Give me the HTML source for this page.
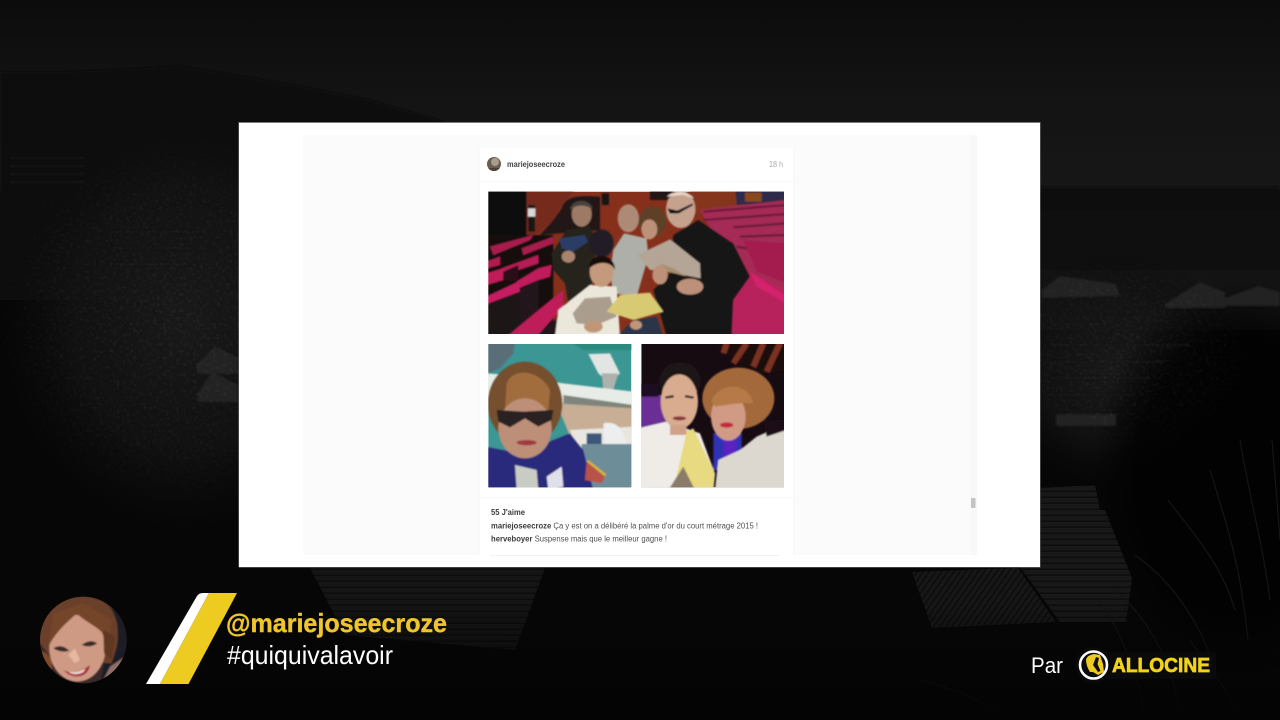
<!DOCTYPE html>
<html lang="fr">
<head>
<meta charset="utf-8">
<title>#quiquivalavoir</title>
<style>
html,body{margin:0;padding:0;width:1280px;height:720px;overflow:hidden;background:#060606}
svg{display:block}
text{font-family:"Liberation Sans",sans-serif}
</style>
</head>
<body>
<svg width="1280" height="720" viewBox="0 0 1280 720" xmlns="http://www.w3.org/2000/svg">
<defs>
<linearGradient id="sky" x1="0" y1="0" x2="0" y2="1"><stop offset="0" stop-color="#0c0c0c"/><stop offset=".5" stop-color="#131313"/><stop offset="1" stop-color="#171717"/></linearGradient>
<linearGradient id="fadeB" x1="0" y1="0" x2="0" y2="1"><stop offset="0" stop-color="#040404" stop-opacity="0"/><stop offset="1" stop-color="#040404"/></linearGradient>
<radialGradient id="lit"><stop offset="0" stop-color="#191919"/><stop offset=".6" stop-color="#131313" stop-opacity=".8"/><stop offset="1" stop-color="#0a0a0a" stop-opacity="0"/></radialGradient>
<radialGradient id="blk"><stop offset="0" stop-color="#020202"/><stop offset=".7" stop-color="#020202" stop-opacity=".9"/><stop offset="1" stop-color="#020202" stop-opacity="0"/></radialGradient>
<radialGradient id="wm"><stop offset="0" stop-color="#fff"/><stop offset=".6" stop-color="#fff" stop-opacity=".7"/><stop offset="1" stop-color="#fff" stop-opacity="0"/></radialGradient>
<mask id="mL" maskUnits="userSpaceOnUse" x="0" y="0" width="1280" height="720"><ellipse cx="170" cy="320" rx="200" ry="210" fill="url(#wm)"/><ellipse cx="1120" cy="350" rx="150" ry="110" fill="url(#wm)"/></mask>
<pattern id="roofH" width="5" height="6" patternUnits="userSpaceOnUse"><rect width="5" height="6" fill="#181818"/><rect y="4.500" width="5" height="1.500" fill="#0d0d0d"/></pattern>
<pattern id="roofD" width="5" height="5" patternUnits="userSpaceOnUse" patternTransform="rotate(35)"><rect width="5" height="5" fill="#171717"/><rect x="3.500" width="1.500" height="5" fill="#0c0c0c"/></pattern>
<filter id="b1" x="-5%" y="-5%" width="110%" height="110%"><feGaussianBlur stdDeviation="1"/></filter>
<filter id="b3" x="-10%" y="-10%" width="120%" height="120%"><feGaussianBlur stdDeviation="2.200"/></filter>
<filter id="t" x="0" y="0" width="100%" height="100%"><feGaussianBlur stdDeviation=".25"/></filter>
<filter id="noise" x="0" y="0" width="100%" height="100%"><feTurbulence type="fractalNoise" baseFrequency=".3" numOctaves="2" seed="7"/><feColorMatrix values="0 0 0 0 1  0 0 0 0 1  0 0 0 0 1  2 0 0 0 -.95"/></filter>
<clipPath id="c1"><rect x="55" y="155" width="887" height="427"/></clipPath>
<clipPath id="c2"><rect x="55" y="12" width="429" height="430"/></clipPath>
<clipPath id="c3"><rect x="514" y="12" width="428" height="430"/></clipPath>
<clipPath id="cAv"><circle cx="250" cy="180" r="130"/></clipPath>
<clipPath id="cSm"><circle cx="494" cy="164" r="7"/></clipPath>
</defs>

<!-- background -->
<rect width="1280" height="720" fill="#060606"/>
<rect width="1280" height="190" fill="url(#sky)"/>
<path d="M0 72 L60 72 L110 70 L180 66 L240 76 L300 86 L370 100 L445 122 L445 300 L0 300Z" fill="#090909" filter="url(#b1)"/>
<ellipse cx="185" cy="320" rx="190" ry="220" fill="url(#lit)"/>
<rect x="1040" y="187" width="240" height="23" fill="#090909" filter="url(#b1)"/>
<rect x="1040" y="210" width="240" height="60" fill="#0f0f0f"/>
<rect x="1040" y="270" width="240" height="60" fill="#131313"/>
<ellipse cx="1115" cy="370" rx="130" ry="120" fill="url(#lit)"/>
<ellipse cx="1240" cy="480" rx="150" ry="200" fill="url(#blk)"/>
<g fill="#222" filter="url(#b1)">
<path d="M197 364 L215 346 L238 358 V374 H197Z"/>
<path d="M197 394 L212 372 L238 385 V402 H197Z"/>
<path d="M1042 290 L1060 276 L1116 284 L1120 296 L1042 298Z"/>
<path d="M1165 304 L1200 282 L1225 292 L1225 308 L1165 308Z"/>
<path d="M1225 298 L1258 286 L1280 292 V306 H1225Z"/>
<rect x="1056" y="414" width="60" height="12"/>
</g>
<g stroke="#1c1c1c" stroke-width="1.500" fill="none" filter="url(#b1)">
<path d="M1050 345 H1190 M1045 362 H1165 M1050 378 H1150 M1045 395 H1130"/>
<path d="M10 158 H85 M10 166 H85 M10 174 H85 M10 182 H85"/>
<path d="M110 232 H195 M110 248 H195 M110 264 H195"/>
</g>
<!-- texture on lit zones -->
<g mask="url(#mL)"><rect width="1280" height="720" filter="url(#noise)" opacity=".08"/></g>
<!-- roofs -->
<path d="M1041 488 L1095 485 L1100 510 L1041 510Z" fill="url(#roofH)"/>
<path d="M1041 510 L1105 510 L1132 578 L1126 622 L1060 622 L1020 567 L1041 567Z" fill="url(#roofH)"/>
<path d="M912 572 L1018 568 L1056 622 L932 628 Z" fill="url(#roofD)"/>
<path d="M310 568 L545 568 L515 650 L345 635Z" fill="url(#roofH)" opacity=".85"/>
<!-- palms -->
<g stroke="#151515" stroke-width="1.200" fill="none">
<path d="M1168 500 C1190 530 1220 560 1235 610 M1135 555 C1170 580 1200 620 1215 670 M1240 440 C1250 500 1262 540 1270 600 M1115 590 C1150 620 1170 660 1180 710 M1210 470 C1225 520 1240 560 1248 640 M1272 440 C1275 480 1278 510 1280 540 M1100 600 C1125 640 1140 680 1145 720 M1190 640 C1210 670 1230 690 1240 720 M920 680 C960 690 990 705 1010 720"/>
</g>
<rect y="600" width="1280" height="120" fill="url(#fadeB)"/>

<!-- panel -->
<rect x="238.5" y="122" width="802" height="445.5" fill="#7a7a7a"/>
<rect x="239" y="123" width="801" height="444" fill="#fff"/>
<rect x="303" y="135" width="667" height="420" fill="#fbfbfb"/>
<rect x="970" y="135" width="7" height="420" fill="#f8f8f8"/>
<rect x="971" y="498" width="4.5" height="10" rx="1" fill="#c4c4c4"/>
<rect x="479" y="148" width="315" height="407" fill="#fff"/>
<path d="M479 148 V555 M794 148 V555" stroke="#f5f5f5" fill="none"/>
<path d="M479 181.5 H794 M479 497.5 H794" stroke="#f8f8f8" fill="none"/>
<path d="M490 555.5 H780" stroke="#f2f2f2" fill="none"/>

<!-- header -->
<g clip-path="url(#cSm)"><rect x="486" y="156" width="16" height="16" fill="#6a5e50"/><circle cx="495" cy="162" r="4" fill="#a89c8c"/><rect x="486" y="168" width="16" height="5" fill="#4a4238"/></g>
<text x="507" y="167" font-size="7.800" font-weight="700" fill="#444" textLength="58" lengthAdjust="spacingAndGlyphs" filter="url(#t)">mariejoseecroze</text>
<text x="769" y="167" font-size="8.200" fill="#a8a8a8" textLength="14" lengthAdjust="spacingAndGlyphs" filter="url(#t)">18 h</text>

<!-- photo 1 -->
<g transform="translate(470 140) scale(.33333)">
<g clip-path="url(#c1)">
<rect x="55" y="155" width="887" height="427" fill="#86301c"/>
<g filter="url(#b3)">
<rect x="45" y="145" width="125" height="160" fill="#0e0c0c"/>
<path d="M170 145 H320 L280 190 L250 240 L200 285 L170 285Z" fill="#752c1c"/>
<path d="M275 205 C285 170 320 165 390 170 L390 270 L210 285 L250 240Z" fill="#231816"/>
<rect x="395" y="160" width="22" height="35" fill="#141414"/>
<rect x="540" y="150" width="70" height="30" fill="#201613"/>
<rect x="660" y="145" width="140" height="75" fill="#84351a"/>
<path d="M795 145 H950 V185 L800 195Z" fill="#2e2c48"/>
<path d="M825 158 H875 V185 H825Z" fill="#8a4a1a"/>
<path d="M690 210 L950 180 V480 L790 500 L760 330Z" fill="#a52a56"/>
<path d="M700 215 L950 195 M700 240 L950 222 M790 262 L950 250 M810 290 L950 285 M800 320 L950 345" stroke="#6e1a3a" stroke-width="7" fill="none"/>
<path d="M820 300 L950 310 V430 L860 395Z" fill="#a31e4e"/>
<path d="M780 470 L840 395 L950 450 V590 H770Z" fill="#b8205c"/>
<path d="M840 395 L950 470 V490 L860 440Z" fill="#d4226c"/>
<path d="M45 285 H250 V590 H45Z" fill="#15100f"/>
<path d="M60 320 L70 345 L180 300 L190 285Z" fill="#a81c4e"/>
<path d="M155 325 L160 345 L250 310 V290Z" fill="#a81c4e"/>
<path d="M50 365 L90 350 V375 L50 385Z" fill="#b01a50"/>
<path d="M95 385 L205 345 L205 370 L100 405Z" fill="#b81c56"/>
<path d="M50 400 L98 385 L100 420 L50 435Z" fill="#c01c5a"/>
<path d="M100 395 L145 375 L145 425 L100 420Z" fill="#2a1018"/>
<path d="M140 425 L205 385 L245 375 L240 410 L205 420 L145 445Z" fill="#c01c5c"/>
<path d="M50 470 L145 425 L150 455 L50 495Z" fill="#c81e62"/>
<path d="M55 490 L150 455 L150 590 H55Z" fill="#1d1416"/>
<path d="M150 450 L205 420 L205 520 L150 580Z" fill="#20161a"/>
<path d="M110 590 L170 540 L280 450 L280 500 L200 590Z" fill="#bf1c5a"/>
<path d="M200 590 L300 500 V590Z" fill="#20171a"/>
<rect x="175" y="195" width="20" height="80" fill="#181616"/>
<rect x="174" y="205" width="22" height="25" fill="#d8d8d8"/>
<path d="M245 340 L290 270 L360 260 L380 300 L360 480 L300 520 L285 430 L250 390Z" fill="#26221f"/>
<ellipse cx="335" cy="222" rx="30" ry="38" fill="#9c7a66"/>
<path d="M300 210 C302 175 365 172 368 210 C350 192 320 192 300 210Z" fill="#47423e"/>
<path d="M268 295 L345 285 L355 305 L310 335 L275 325Z" fill="#2c3e66"/>
<ellipse cx="395" cy="310" rx="36" ry="42" fill="#201c26"/>
<path d="M430 330 L462 280 L530 295 L535 350 L500 470 L430 460 L420 400Z" fill="#aeafa8"/>
<ellipse cx="475" cy="235" rx="32" ry="42" fill="#ad8a76"/>
<ellipse cx="548" cy="245" rx="42" ry="46" fill="#5f4027"/>
<ellipse cx="538" cy="268" rx="24" ry="30" fill="#bc9178"/>
<path d="M610 285 L685 240 L790 310 L840 410 L790 480 L785 590 L590 590 L550 450 L600 400Z" fill="#141213"/>
<ellipse cx="632" cy="208" rx="44" ry="56" fill="#c5a28e"/>
<path d="M590 170 C610 150 650 150 672 175 L640 165Z" fill="#e4d4c8"/>
<path d="M592 205 L622 212 L668 190 L668 196 L640 212 L626 220 L600 220Z" fill="#111"/>
<path d="M502 345 L600 298 L690 370 L692 415 L590 395 L540 390Z" fill="#b4a596"/>
<path d="M570 370 L595 395 L650 410 L610 385Z" fill="#a4906e"/>
<ellipse cx="660" cy="440" rx="40" ry="24" fill="#bd9079"/>
<ellipse cx="570" cy="405" rx="23" ry="28" fill="#bd9079"/>
<ellipse cx="295" cy="350" rx="20" ry="18" fill="#a8846e"/>
<path d="M255 590 L265 510 L360 435 L440 440 L450 590Z" fill="#ebe7db"/>
<ellipse cx="395" cy="395" rx="36" ry="46" fill="#c59a7c"/>
<path d="M358 385 C355 335 435 335 435 390 C425 365 385 360 358 385Z" fill="#120d0c"/>
<path d="M308 520 L345 475 L420 470 L440 530 L380 555 L320 550Z" fill="#ab9d8e"/>
<path d="M410 515 L450 465 L540 458 L580 515 L490 540Z" fill="#d8ca72"/>
<path d="M440 590 L490 540 L560 530 L580 590Z" fill="#2c3648"/>
<ellipse cx="370" cy="560" rx="28" ry="18" fill="#c09678"/>
<ellipse cx="498" cy="555" rx="18" ry="14" fill="#c09678"/>
</g>
</g>
</g>

<!-- photos 2 and 3 -->
<g transform="translate(470 340) scale(.33333)">
<g clip-path="url(#c2)">
<rect x="55" y="12" width="429" height="430" fill="#3b9694"/>
<g filter="url(#b3)">
<path d="M45 5 H135 L130 40 L90 85 L45 105Z" fill="#5a6e78"/>
<path d="M300 5 H490 V30 L340 30Z" fill="#2b8a80"/>
<path d="M355 42 L420 40 L450 100 L420 130 L385 100Z" fill="#e2e5e2"/>
<path d="M395 100 L445 100 L430 150 L400 150Z" fill="#aeb2ad"/>
<path d="M45 100 L120 105 L280 130 L490 155 V205 L280 190 L45 170Z" fill="#e8ece6"/>
<path d="M280 165 L490 195 V210 L280 190Z" fill="#7f857c"/>
<path d="M260 190 L490 205 V290 L300 290Z" fill="#c7ae94"/>
<path d="M300 270 L490 260 V330 L320 330Z" fill="#e8e6df"/>
<path d="M350 280 H395 V320 H350Z" fill="#3e5679"/>
<path d="M400 250 C440 240 465 270 470 320 H405Z" fill="#eee"/>
<path d="M335 312 H490 V450 H335Z" fill="#6d8d99"/>
<path d="M45 320 L150 340 L300 280 L340 330 L370 450 H45Z" fill="#2a2a7c"/>
<path d="M135 375 L200 390 L205 450 H140Z" fill="#c8ccc4"/>
<path d="M230 410 L275 380 L280 440 L235 450Z" fill="#dfe0ea"/>
<ellipse cx="165" cy="190" rx="112" ry="125" fill="#75502f"/>
<path d="M110 130 C130 80 210 90 240 150 L235 210 L105 210Z" fill="#a26d3e"/>
<ellipse cx="165" cy="265" rx="80" ry="90" fill="#bd8f78"/>
<path d="M80 210 L160 215 L250 210 L245 240 L205 260 L165 235 L120 262 L85 245Z" fill="#2a2420"/>
<ellipse cx="170" cy="308" rx="30" ry="8" fill="#a03a3c"/>
<path d="M350 365 L405 410 L395 430 L345 420Z" fill="#b85248"/>
<path d="M350 365 L405 410 L408 402 L355 360Z" fill="#d8b238"/>
</g>
</g>
<g clip-path="url(#c3)">
<rect x="514" y="12" width="428" height="430" fill="#170b12"/>
<g filter="url(#b3)">
<path d="M730 5 L950 5 V90 L880 100 L800 60Z" fill="#1e0f0f"/>
<path d="M770 10 L760 40 M830 10 L790 70 M880 10 L850 80 M930 10 L890 95" stroke="#7a3224" stroke-width="18" fill="none"/>
<rect x="505" y="165" width="90" height="110" fill="#6a2e94"/>
<rect x="505" y="130" width="60" height="40" fill="#1f1020"/>
<rect x="730" y="280" width="85" height="110" fill="#2e32b4"/>
<rect x="760" y="280" width="40" height="70" fill="#5a22c0"/>
<path d="M505 265 L590 245 L690 280 L735 400 L730 450 H505Z" fill="#efece8"/>
<ellipse cx="630" cy="125" rx="62" ry="58" fill="#1a1516"/>
<ellipse cx="628" cy="185" rx="56" ry="82" fill="#d9ac90"/>
<path d="M585 170 L610 165 L612 172 L587 176Z M645 165 L672 170 L670 176 L645 172Z" fill="#2a1c18"/>
<ellipse cx="628" cy="235" rx="20" ry="6" fill="#8a3a3a"/>
<rect x="600" y="255" width="50" height="30" fill="#cfa288"/>
<path d="M650 275 L670 265 L735 400 L730 450 L610 450Z" fill="#e7da80"/>
<path d="M595 450 L640 380 L675 450Z" fill="#8a7c68"/>
<path d="M735 450 L745 360 L810 330 L860 290 L950 250 V450Z" fill="#dcd8d0"/>
<ellipse cx="805" cy="175" rx="108" ry="92" fill="#a3693a"/>
<path d="M880 240 L945 240 L950 270 L890 290Z" fill="#1a0f12"/>
<ellipse cx="775" cy="230" rx="52" ry="72" fill="#d09a84"/>
<path d="M725 180 C750 130 830 120 850 190 L800 190 L735 200Z" fill="#b57a46"/>
<ellipse cx="770" cy="255" rx="20" ry="8" fill="#c22c42"/>
</g>
</g>
</g>

<!-- caption -->
<g filter="url(#t)" font-size="7.800" fill="#505050">
<text x="491" y="515" font-weight="700" fill="#3a3a3a" textLength="34" lengthAdjust="spacingAndGlyphs">55 J'aime</text>
<text x="491" y="528.5" textLength="267" lengthAdjust="spacingAndGlyphs"><tspan font-weight="700" fill="#3a3a3a">mariejoseecroze</tspan> Ça y est on a délibéré la palme d'or du court métrage 2015 !</text>
<text x="491" y="541.5" textLength="176" lengthAdjust="spacingAndGlyphs"><tspan font-weight="700" fill="#3a3a3a">herveboyer</tspan> Suspense mais que le meilleur gagne !</text>
</g>

<!-- avatar -->
<g transform="translate(0 580) scale(.33333)">
<g clip-path="url(#cAv)">
<rect x="110" y="40" width="280" height="280" fill="#3b2a28"/>
<g filter="url(#b3)">
<path d="M340 80 L400 100 V320 H300Z" fill="#1f1f28"/>
<path d="M330 260 L390 220 V320 H300Z" fill="#8f6f66"/>
<path d="M120 190 C110 90 190 45 260 50 C330 55 365 110 350 200 L335 250 L160 240Z" fill="#6a3f2a"/>
<ellipse cx="232" cy="205" rx="84" ry="100" fill="#cf9a84"/>
<path d="M145 200 C170 150 210 120 230 100 C260 130 300 140 325 180 L335 120 L250 70 L160 100Z" fill="#744429"/>
<path d="M125 215 C145 215 160 240 155 270 C130 255 120 240 125 215Z" fill="#80492c"/>
<path d="M310 150 L345 170 L335 240 L312 220Z" fill="#5e3824"/>
<path d="M160 205 Q185 190 208 212 Q185 220 160 205Z" fill="#3a2a28"/>
<path d="M245 195 Q270 175 292 190 Q270 205 245 195Z" fill="#3a2a28"/>
<path d="M205 225 L225 250 L240 240 L225 205Z" fill="#e4b8a2"/>
<path d="M190 270 C220 285 250 270 270 255 C265 295 215 300 190 270Z" fill="#a52c3e"/>
<path d="M205 275 C225 280 245 272 258 265 L250 276 C235 285 215 285 205 275Z" fill="#eedcd4"/>
</g>
</g>
</g>

<!-- slash -->
<path d="M146 684 L197 596 Q199 593 203 593 L209 593 L160 684Z" fill="#fff"/>
<path d="M160 684 L209 593 L237 593 L188.500 684Z" fill="#eecb20"/>
<text x="226" y="632" font-size="26" font-weight="700" fill="#eec52c" stroke="#eec52c" stroke-width=".4" textLength="221" lengthAdjust="spacingAndGlyphs">@mariejoseecroze</text>
<text x="227" y="664" font-size="26" fill="#fff" textLength="166" lengthAdjust="spacingAndGlyphs">#quiquivalavoir</text>

<!-- par allocine -->
<text x="1031" y="673" font-size="22" fill="#fff" textLength="32" lengthAdjust="spacingAndGlyphs">Par</text>
<rect x="1098" y="652" width="118" height="27" rx="2" fill="#0a0a0a"/>
<circle cx="1093.500" cy="665" r="18" fill="#0a0a0a"/>
<circle cx="1093.500" cy="665" r="13.500" fill="#0c0c0c" stroke="#fff" stroke-width="2.600"/>
<path d="M1086 659 Q1088 655 1094 654 L1100 655 L1103 664 L1104 672 L1098 675 L1093 672 L1090 672 Q1086 666 1086 659Z" fill="#eecb20"/>
<path d="M1096 657 L1093 665 L1098 672 L1100.500 671 L1097.500 664 L1099 658Z" fill="#0c0c0c"/>
<text x="1112" y="672" font-size="20" font-weight="700" fill="#f3d21a" stroke="#f3d21a" stroke-width=".7" textLength="98" lengthAdjust="spacingAndGlyphs">ALLOCINE</text>
</svg>
</body>
</html>
